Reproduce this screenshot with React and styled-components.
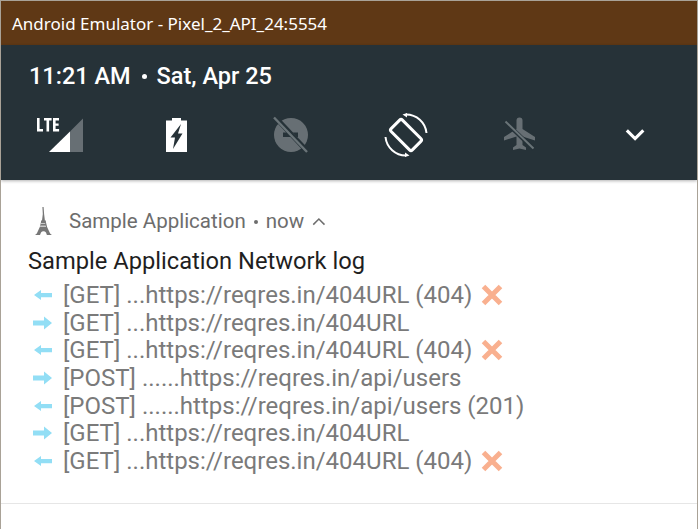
import React from "react";
import styled, { createGlobalStyle } from "styled-components";

const logRows = [
  { dir: "in", text: "[GET] ...https://reqres.in/404URL (404)", failed: true },
  { dir: "out", text: "[GET] ...https://reqres.in/404URL" },
  { dir: "in", text: "[GET] ...https://reqres.in/404URL (404)", failed: true },
  { dir: "out", text: "[POST] ......https://reqres.in/api/users" },
  { dir: "in", text: "[POST] ......https://reqres.in/api/users (201)" },
  { dir: "out", text: "[GET] ...https://reqres.in/404URL" },
  { dir: "in", text: "[GET] ...https://reqres.in/404URL (404)", failed: true },
];

function LteIcon() {
  return (
    <svg width="48" height="36" viewBox="0 0 48 36">
      <path d="M0 1h2.600v11H6v2.400H0z M7 1h7.600v2.400h-2.500v11H9.500V3.400H7z M16 1h6v2.400h-3.400v3h3v2.400h-3v3.200h3.500v2.400H16z" fill="#fff" />
      <path d="M12 35 L33 14.500 V35z" fill="#fff" />
      <path d="M33 14.500 L46 1.500 V35 H33z" fill="#fff" fillOpacity="0.3" />
    </svg>
  );
}

function BatteryIcon() {
  return (
    <svg width="22" height="36" viewBox="-1 0 22 36">
      <path
        fillRule="evenodd"
        fill="#fff"
        d="M6 1h9v2.500h6V35H0V3.500h6z M15 7 L4.500 20.500h4.500L7 32 L16.500 16.500h-4.500z"
      />
    </svg>
  );
}

function DndIcon() {
  return (
    <svg width="38" height="38" viewBox="0 0 38 38">
      <circle cx="19" cy="19" r="17" fill="#fff" fillOpacity="0.3" />
      <path d="M11 16.500h6l3.500 4.500H11z" fill="#263238" />
      <path d="M21 16.500h5v4.500h-1.500z" fill="#263238" />
      <path d="M3 1 L35 35" stroke="#263238" strokeWidth="5" />
      <path d="M2 1.500 L35 36" stroke="#6a7478" strokeWidth="2.400" />
    </svg>
  );
}

function RotateIcon() {
  return (
    <svg width="44" height="44" viewBox="0 0 44 44">
      <rect
        x="7"
        y="14"
        width="30"
        height="16"
        rx="2"
        transform="rotate(45 22 22)"
        fill="none"
        stroke="#fff"
        strokeWidth="3"
      />
      <path d="M22 1.500 A20.500 20.500 0 0 1 42.500 20" fill="none" stroke="#fff" strokeWidth="2" />
      <path d="M22 42.500 A20.500 20.500 0 0 1 1.500 24" fill="none" stroke="#fff" strokeWidth="2" />
      <path d="M23 0 l-4.500 1.500 l4.500 3z M21 44 l4.500-1.500 l-4.500-3z" fill="#fff" />
    </svg>
  );
}

function PlaneIcon() {
  return (
    <svg width="36" height="36" viewBox="1.500 0 36 36">
      <path
        fill="#fff"
        fillOpacity="0.3"
        d="M15 3.500 a3 3 0 0 1 6 0 V12 L33.500 20 v3.500 L21 19.500 V28 L24.500 30.500 V33 L18 31.500 L11.500 33 V30.500 L15 28 V19.500 L2.500 23.500 V20 L15 12z"
      />
      <path d="M4 5 L32 32" stroke="#263238" strokeWidth="4" />
      <path d="M4 4.500 L32 31.500" stroke="#6a7478" strokeWidth="2" />
    </svg>
  );
}

function ChevronIcon({ up, size, color, weight }) {
  return (
    <svg width={size} height={size} viewBox="1 0 24 24">
      <path
        d={up ? "M3 17 L12 8 L21 17" : "M3 7 L12 16 L21 7"}
        fill="none"
        stroke={color}
        strokeWidth={weight}
      />
    </svg>
  );
}

function ArrowIcon({ dir }) {
  return (
    <ArrowBox $flip={dir === "out"} viewBox="0 0 20 14" width="20" height="14">
      <path
        fill="#92def5"
        d={
          dir === "out"
            ? "M0 7 L8 .500 V4.500 H19 V9.500 H8 V13.500z"
            : "M2 7 L9 2 V5 H20 V9.300 H9 V12z"
        }
      />
    </ArrowBox>
  );
}

function CrossIcon() {
  return (
    <CrossBox viewBox="0 0 22 22" width="22" height="22">
      <path d="M2.500 2.500 L19.500 19.500 M19.500 2.500 L2.500 19.500" stroke="#f9b08f" strokeWidth="5" />
    </CrossBox>
  );
}

function TowerIcon() {
  return (
    <TowerBox width="20" height="29" viewBox="0 0 20 29">
      <path
        fill="#777"
        d="M9.400 0h1.200l.5 7 .8 6.500h1v1.500l1.200 5 3 6.500 1.800 1.500h-5l-.9-2.500a3 3 0 0 0-5 0L7 28H2l1.800-1.500 3-6.500 1.200-5v-1.500h1l.8-6.500z"
      />
      <path fill="#fff" fillOpacity="0.6" d="M8 16h4l.4 1H7.700z M7.300 18.500h5.400l.4 1.500H7z" />
    </TowerBox>
  );
}

export default function App() {
  return (
    <>
      <GlobalStyle />
      <Window>
        <TitleBar>Android Emulator - Pixel_2_API_24:5554</TitleBar>
        <QuickPanel>
          <DateRow>
            <span>11:21 AM</span>
            <Dot />
            <span>Sat, Apr 25</span>
          </DateRow>
          <TileRow>
            <Tile><LteIcon /></Tile>
            <Tile><BatteryIcon /></Tile>
            <Tile><DndIcon /></Tile>
            <Tile><RotateIcon /></Tile>
            <Tile><PlaneIcon /></Tile>
            <Tile><ChevronIcon size={22} color="#fff" weight={3.4} /></Tile>
          </TileRow>
        </QuickPanel>
        <Notification>
          <AppRow>
            <TowerIcon />
            <AppName>Sample Application</AppName>
            <SmallDot />
            <AppName>now</AppName>
            <UpChevron>
              <ChevronIcon up size={15} color="#6d6d6d" weight={2.4} />
            </UpChevron>
          </AppRow>
          <NoteTitle>Sample Application Network log</NoteTitle>
          <LogList>
            {logRows.map((row, i) => (
              <LogRow key={i}>
                <ArrowIcon dir={row.dir} />
                <span>{row.text}</span>
                {row.failed && <CrossIcon />}
              </LogRow>
            ))}
          </LogList>
        </Notification>
        <Footer />
      </Window>
    </>
  );
}

const GlobalStyle = createGlobalStyle`
  html, body {
    margin: 0;
    padding: 0;
    background: #fff;
  }
`;

const Window = styled.div`
  box-sizing: border-box;
  width: 698px;
  height: 529px;
  overflow: hidden;
  display: flex;
  flex-direction: column;
  background: #fff;
  border: 1px solid #a9a297;
  border-bottom: 0;
  font-family: Roboto, sans-serif;
`;

const TitleBar = styled.div`
  height: 44px;
  flex: none;
  display: flex;
  align-items: center;
  padding-left: 11px;
  background: #5f3815;
  color: #fff;
  font-family: "Noto Sans", sans-serif;
  font-size: 17px;
`;

const QuickPanel = styled.div`
  height: 135px;
  flex: none;
  background: #263238;
  box-shadow: 0 1px 3px rgba(0, 0, 0, 0.3);
`;

const DateRow = styled.div`
  display: flex;
  align-items: center;
  padding: 17px 0 0 28px;
  height: 29px;
  color: #fff;
  font-size: 23.5px;
  font-weight: 500;
  line-height: 29px;
`;

const Dot = styled.i`
  width: 5px;
  height: 5px;
  margin: 0 10px 0 11px;
  border-radius: 50%;
  background: #fff;
`;

const TileRow = styled.div`
  display: grid;
  grid-template-columns: repeat(6, 115px);
  margin-top: 21px;
  padding-left: 2px;
`;

const Tile = styled.div`
  height: 46px;
  display: flex;
  align-items: center;
  justify-content: center;
`;

const Notification = styled.div`
  padding: 27px 0 0 27px;
`;

const AppRow = styled.div`
  display: flex;
  align-items: center;
  height: 29px;
  color: #6d6d6d;
  font-size: 20.5px;
`;

const TowerBox = styled.svg`
  flex: none;
  margin: 0 16px 0 5px;
`;

const AppName = styled.span`
  line-height: 29px;
`;

const SmallDot = styled.i`
  width: 4px;
  height: 4px;
  margin: 0 8px;
  border-radius: 50%;
  background: #6d6d6d;
`;

const UpChevron = styled.span`
  display: flex;
  margin-left: 8px;
`;

const NoteTitle = styled.div`
  margin-top: 10px;
  height: 30px;
  color: #1f1f1f;
  font-size: 23.7px;
  line-height: 30px;
`;

const LogList = styled.div`
  margin-top: 5px;
  display: flex;
  flex-direction: column;
`;

const LogRow = styled.div`
  height: 27.7px;
  display: flex;
  align-items: center;
  color: #7a7a7a;
  font-size: 24px;
  white-space: nowrap;
`;

const ArrowBox = styled.svg`
  flex: none;
  margin: 0 11px 0 4px;
  ${(props) => props.$flip && "transform: scaleX(-1);"}
`;

const CrossBox = styled.svg`
  flex: none;
  margin-left: 9px;
`;

const Footer = styled.div`
  margin-top: 28px;
  border-top: 1px solid #e6e6e6;
`;
